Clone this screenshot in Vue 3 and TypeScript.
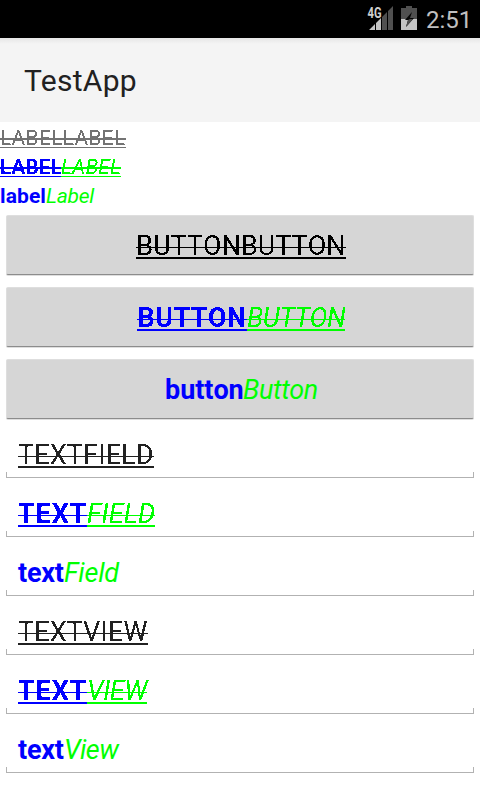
<script setup lang="ts">
interface Run {
  text: string
  tone: 'plain' | 'bold' | 'italic'
  width: number
  spacing: number
}
interface Row {
  lined: boolean
  runs: Run[]
}

const pair = (lined: boolean, a: string, aw: number, as: number, b: string, bw: number, bs: number): Row => ({
  lined,
  runs: [
    { text: a, tone: 'bold', width: aw, spacing: as },
    { text: b, tone: 'italic', width: bw, spacing: bs },
  ],
})
const single = (text: string, width: number, spacing: number): Row => ({
  lined: true,
  runs: [{ text, tone: 'plain', width, spacing }],
})
const runStyle = (r: Run) => ({ width: r.width + 'px', letterSpacing: r.spacing + 'px' })

const labels: Row[] = [
  single('LABELLABEL', 126, 0.3),
  pair(true, 'LABEL', 61, -0.1, 'LABEL', 60, 0.1),
  pair(false, 'label', 46, 0.1, 'Label', 49, -0.25),
]
const buttons: Row[] = [
  single('BUTTONBUTTON', 210, 0.05),
  pair(true, 'BUTTON', 110, 0.5, 'BUTTON', 98, -0.5),
  pair(false, 'button', 78, -0.05, 'Button', 74, -0.4),
]
const fields: Row[] = [
  single('TEXTFIELD', 136, 0.15),
  pair(true, 'TEXT', 69, 0.9, 'FIELD', 68, 0.1),
  pair(false, 'text', 46, -0.2, 'Field', 55, -0.2),
  single('TEXTVIEW', 130, 0.15),
  pair(true, 'TEXT', 69, 0.9, 'VIEW', 60, -0.5),
  pair(false, 'text', 46, -0.2, 'View', 55, -0.6),
]
</script>

<template>
  <div class="screen">
    <svg class="defs" width="0" height="0">
      <filter id="crisp" x="-5%" y="-5%" width="110%" height="110%" color-interpolation-filters="sRGB">
        <feComponentTransfer><feFuncA type="discrete" tableValues="0 1" /></feComponentTransfer>
      </filter>
    </svg>
    <header class="status">
      <svg class="signal" width="27" height="26" viewBox="0 0 27 26">
        <path d="M1 25 7 19V25ZM8 18 13 13V25H8Z" fill="#c4c4c4" />
        <path d="M14 12 19 7V25H14ZM20 6 25 1V25H20Z" fill="#505050" />
        <text x="-.5" y="12.5" textLength="14" lengthAdjust="spacingAndGlyphs">4G</text>
      </svg>
      <svg class="battery" width="16" height="24" viewBox="0 0 16 24">
        <path d="M0 2H5V0H11V2H16V13H0Z" fill="#505050" />
        <path d="M0 13H16V24H0Z" fill="#c4c4c4" />
        <path d="M11 6 4 14H7L5 21 13 12H9Z" fill="#050505" />
        <path d="M9 13H12L5 21 7 14Z" fill="#505050" />
      </svg>
      <span class="clock">2:51</span>
    </header>
    <div class="bar"><span>TestApp</span></div>
    <main>
      <div v-for="(row, i) in labels" :key="'l' + i" class="label" :class="{ lined: row.lined }">
        <span v-for="(r, j) in row.runs" :key="j" class="run" :class="r.tone" :style="runStyle(r)">{{ r.text }}</span>
      </div>
      <div class="buttons">
        <button v-for="(row, i) in buttons" :key="'b' + i" class="button" :class="{ lined: row.lined }">
          <span v-for="(r, j) in row.runs" :key="j" class="run" :class="r.tone" :style="runStyle(r)">{{ r.text }}</span>
        </button>
      </div>
      <div v-for="(row, i) in fields" :key="'f' + i" class="field" :class="{ lined: row.lined }">
        <span v-for="(r, j) in row.runs" :key="j" class="run" :class="r.tone" :style="runStyle(r)">{{ r.text }}</span>
      </div>
    </main>
  </div>
</template>

<style>
body { margin: 0; background: #fff; }
</style>

<style scoped>
.screen { width: 480px; height: 800px; overflow: hidden; background: #fff; font-family: Roboto, sans-serif; }
.defs { display: block; }
.status { height: 38px; box-sizing: border-box; background: #000; display: flex; align-items: flex-start; padding: 6px 10px 0 368px; }
.signal { flex: none; overflow: visible; margin-top: -1px; }
.signal text { font: bold 14.5px Roboto, sans-serif; fill: #d0d0d0; }
.battery { flex: none; margin-left: 6px; }
.clock { flex: none; margin-left: 9px; color: #c0c0c0; font-size: 24px; line-height: 28px; }
.bar { height: 84px; box-sizing: border-box; padding: 0 24px; background: linear-gradient(#e6e6e6, #f4f4f4 6px); color: #212121; font-size: 30px; line-height: 86px; letter-spacing: 0.3px; }
.run { display: block; flex: none; white-space: nowrap; font-kerning: none; }
.plain { color: inherit; }
.bold { color: #00f; font-weight: 700; }
.italic { color: #0f0; font-style: italic; }
.label { display: flex; height: 29px; font-size: 21px; line-height: 33px; color: #737373; }
.lined .run { filter: url(#crisp); }
.label.lined .run { background: linear-gradient(currentColor, currentColor) 0 25px / 100% 1px no-repeat, linear-gradient(currentColor, currentColor) 0 16px / 100% 2px no-repeat; }
.buttons { padding: 6px; display: grid; gap: 12px; }
.button { height: 60px; box-sizing: border-box; display: flex; justify-content: center; padding: 13px 0 0 2px; margin: 0; border: 1px solid #dedede; border-bottom: 1px solid #8c8c8c; box-shadow: 0 1px 0 #dedede; border-radius: 2px; background: #d6d6d6; color: #000; font: 27px/34px Roboto, sans-serif; }
.button.lined .run { height: 34px; background: linear-gradient(currentColor, currentColor) 0 28px / 100% 2px no-repeat, linear-gradient(currentColor, currentColor) 0 18px / 100% 1px no-repeat; }
.field { display: flex; height: 59px; box-sizing: border-box; margin: 0 6px; padding: 14px 12px 0; font-size: 27px; line-height: 32px; color: #212121; background: linear-gradient(#b2b2b2, #b2b2b2) 0 52px / 100% 1px no-repeat, linear-gradient(#b2b2b2, #b2b2b2) 0 47px / 1px 6px no-repeat, linear-gradient(#b2b2b2, #b2b2b2) 100% 47px / 1px 6px no-repeat; }
.field.lined .run { height: 32px; background: linear-gradient(currentColor, currentColor) 0 27px / 100% 2px no-repeat, linear-gradient(currentColor, currentColor) 0 17px / 100% 1px no-repeat; }
</style>
